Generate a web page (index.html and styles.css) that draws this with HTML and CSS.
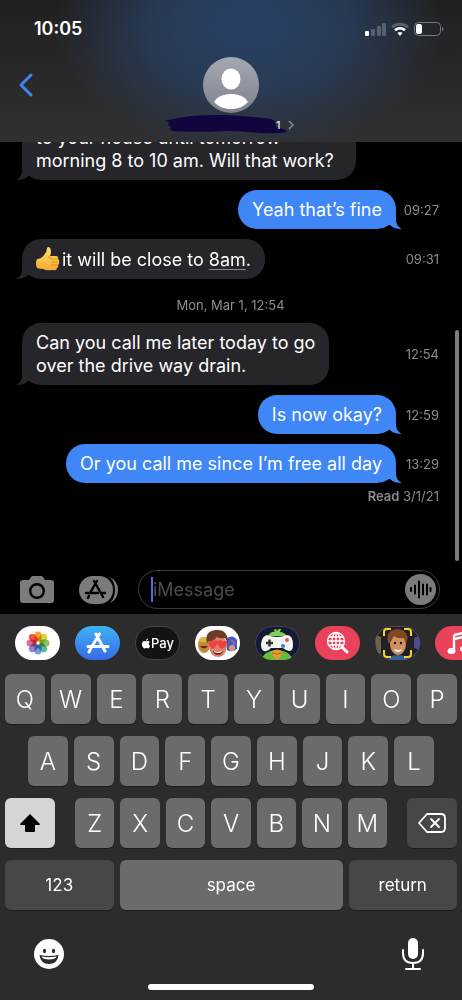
FILE: index.html
```html
<!DOCTYPE html>
<html lang="en">
<head>
    <meta charset="UTF-8">
    <meta name="viewport" content="width=device-width, initial-scale=1.0">
    <title>Messages</title>
    <link rel="stylesheet" href="styles.css">
</head>
<body>
    <div class="phone">
        <header class="header">
            <div class="status-bar">
                <span class="clock">10:05</span>
                <svg width="80" height="16" viewBox="0 0 80 16" aria-hidden="true">
                    <rect x="1" y="10" width="4" height="5" rx="1" fill="#fff"/>
                    <rect x="7" y="8" width="4" height="7" rx="1" fill="#56616f"/>
                    <rect x="13" y="5" width="4" height="10" rx="1" fill="#56616f"/>
                    <rect x="18" y="2" width="4" height="13" rx="1" fill="#56616f"/>
                    <path d="M28 6.200a12 12 0 0 1 16 0" fill="none" stroke="#59616a" stroke-width="2.600"/>
                    <path d="M31 9.200a7.500 7.500 0 0 1 10 0" fill="none" stroke="#fff" stroke-width="2.600"/>
                    <path d="M33.500 12a4 4 0 0 1 5 0L36 15z" fill="#fff"/>
                    <rect x="50.500" y="1.500" width="26" height="13" rx="4" fill="none" stroke="#77797c"/>
                    <rect x="52" y="3" width="6" height="10" rx="2" fill="#fff"/>
                    <path d="M78 6v4q1.500-.5 1.500-2T78 6z" fill="#77797c"/>
                </svg>
            </div>
            <button class="back" aria-label="Back">
                <svg width="16" height="26" viewBox="0 0 16 26"><path d="M13 3L3 13l10 10" fill="none" stroke="#3f83f5" stroke-width="3" stroke-linecap="round" stroke-linejoin="round"/></svg>
            </button>
            <button class="contact" aria-label="Contact details">
                <svg class="avatar" width="56" height="56" viewBox="0 0 56 56">
                    <defs>
                        <linearGradient id="avatarFill" x2="0" y2="1"><stop stop-color="#a4a8b3"/><stop offset="1" stop-color="#7f828c"/></linearGradient>
                    </defs>
                    <circle cx="28" cy="28" r="28" fill="url(#avatarFill)"/>
                    <ellipse cx="28" cy="22" rx="9.500" ry="10.500" fill="#fff"/>
                    <path d="M11 45c3-6 11-8 17-8s14 2 17 8c-5 5-10 7-17 7s-12-2-17-7z" fill="#fff"/>
                </svg>
                <span class="contact-name">
                    <svg width="124" height="20" viewBox="0 0 124 20">
                        <path d="M0 6l10-2C25 0 45 0 62 0c15 1 31 2 45 4l4 2 1 6 10 3c2 2-2 3-8 3-20 1-34-2-50-2-18 1-38 1-56 0-2-1-2-2-1-4l-3-2 1-3z" fill="#12043c"/>
                    </svg>
                    <span class="contact-digit">1</span>
                    <svg width="6" height="10" viewBox="0 0 6 10"><path d="M1 1l4 4-4 4" fill="none" stroke="#8a8b90" stroke-width="1.500"/></svg>
                </span>
            </button>
        </header>

        <main class="conversation">
            <div class="row">
                <p class="bubble received long">to your house until tomorrow<br>morning 8 to 10 am. Will that work?</p>
            </div>
            <div class="row">
                <p class="bubble sent">Yeah that’s fine</p>
                <time>09:27</time>
            </div>
            <div class="row">
                <p class="bubble received"><svg class="thumb" width="24" height="24" viewBox="0 0 24 24" role="img" aria-label="thumbs up">
                    <defs><linearGradient id="thumbFill" x2="0" y2="1"><stop stop-color="#ffe066"/><stop offset="1" stop-color="#f3a934"/></linearGradient></defs>
                    <path d="M1 12q4 0 7-4 3-3 3-7 1-2 3 0 2 3 0 8h6q3 0 2 3 2 1 1 3 1 2-1 3 1 2-1 3 0 3-4 2-7 1-10-1-3 0-6-1-2-5 0-9z" fill="url(#thumbFill)"/>
                    <path d="M15 12h7M15 15h7M15 18h7M12 10q4 0 3 2" fill="none" stroke="#d48a25" stroke-width=".8"/>
                </svg>it will be close to <a href="#">8am</a>.</p>
                <time>09:31</time>
            </div>
            <div class="date">Mon, Mar 1, 12:54</div>
            <div class="row">
                <p class="bubble received">Can you call me later today to go<br>over the drive way drain.</p>
                <time>12:54</time>
            </div>
            <div class="row">
                <p class="bubble sent">Is now okay?</p>
                <time>12:59</time>
            </div>
            <div class="row">
                <p class="bubble sent">Or you call me since I’m free all day</p>
                <time>13:29</time>
            </div>
            <div class="read"><b>Read</b> 3/1/21</div>
            <div class="scroll-thumb"></div>
        </main>

        <form class="compose">
            <button type="button" aria-label="Camera">
                <svg width="36" height="28" viewBox="0 0 36 28">
                    <path d="M4 4h6l2-3q1-1 2-1h8q1 0 2 1l2 3h6q3 0 3 3v17q0 3-3 3H4q-3 0-3-3V7q0-3 3-3z" fill="#7b7b7b"/>
                    <circle cx="18" cy="15" r="6.800" fill="none" stroke="#000" stroke-width="2.400"/>
                </svg>
            </button>
            <button type="button" aria-label="Apps">
                <svg width="40" height="28" viewBox="0 0 40 28">
                    <rect width="34" height="28" rx="14" fill="#7b7b7b"/>
                    <path d="M31 1q8 4 8 13t-8 13q5-5 5-13T31 1z" fill="#7b7b7b"/>
                    <path d="M18 5l-7 12M15 5l9 16M7 17h12M22 17h4M10 20l-1 2" fill="none" stroke="#000" stroke-width="2.400" stroke-linecap="round"/>
                </svg>
            </button>
            <div class="field">
                <span class="caret"></span>
                <input type="text" placeholder="iMessage" aria-label="iMessage">
                <button type="button" aria-label="Record audio">
                    <svg width="31" height="31" viewBox="0 0 31 31">
                        <circle cx="15.500" cy="15.500" r="15.500" fill="#7b7b7b"/>
                        <path d="M6 14v3M10 11.500v8M14 7.500v16M18 10.500v10M22 10.500v10M25.500 14v3" stroke="#000" stroke-width="2" stroke-linecap="round"/>
                    </svg>
                </button>
            </div>
        </form>

        <section class="keyboard">
            <div class="apps">
                <button class="app white" aria-label="Photos">
                    <svg width="24" height="24" viewBox="-12 -12 24 24">
                        <g class="petals">
                            <rect x="-3.500" y="-11.500" width="7" height="10" rx="3.500" fill="#f5a02c"/>
                            <rect x="-3.500" y="-11.500" width="7" height="10" rx="3.500" fill="#d9d333" transform="rotate(45)"/>
                            <rect x="-3.500" y="-11.500" width="7" height="10" rx="3.500" fill="#8dc45b" transform="rotate(90)"/>
                            <rect x="-3.500" y="-11.500" width="7" height="10" rx="3.500" fill="#59b69a" transform="rotate(135)"/>
                            <rect x="-3.500" y="-11.500" width="7" height="10" rx="3.500" fill="#729edb" transform="rotate(180)"/>
                            <rect x="-3.500" y="-11.500" width="7" height="10" rx="3.500" fill="#9a83c4" transform="rotate(225)"/>
                            <rect x="-3.500" y="-11.500" width="7" height="10" rx="3.500" fill="#d86c9a" transform="rotate(270)"/>
                            <rect x="-3.500" y="-11.500" width="7" height="10" rx="3.500" fill="#ed5a4a" transform="rotate(315)"/>
                        </g>
                    </svg>
                </button>
                <button class="app blue" aria-label="App Store">
                    <svg width="24" height="22" viewBox="0 0 24 22"><path d="M13.500 2L5 16M10 2l9 17M2 14.500h12M18 14.500h4M4 18l-1 2" fill="none" stroke="#fff" stroke-width="3" stroke-linecap="round"/></svg>
                </button>
                <button class="app pay">
                    <svg width="10" height="11" viewBox="0 0 24 24"><path fill="#fff" d="M12.152 6.896c-.948 0-2.415-1.078-3.960-1.040-2.040.027-3.910 1.183-4.961 3.014-2.117 3.675-.546 9.103 1.519 12.090 1.013 1.454 2.208 3.090 3.792 3.039 1.520-.065 2.090-.987 3.935-.987 1.831 0 2.350.987 3.960.948 1.637-.026 2.676-1.480 3.676-2.948 1.156-1.688 1.636-3.325 1.662-3.415-.039-.013-3.182-1.221-3.220-4.857-.026-3.040 2.480-4.494 2.597-4.559-1.429-2.090-3.623-2.324-4.390-2.376-2-.156-3.675 1.090-4.610 1.090zM15.530 3.830c.843-1.012 1.400-2.427 1.245-3.830-1.207.052-2.662.805-3.532 1.818-.780.896-1.454 2.338-1.273 3.714 1.338.104 2.715-.688 3.560-1.702"/></svg>
                    <span>Pay</span>
                </button>
                <button class="app white" aria-label="Memoji stickers">
                    <svg width="45" height="34" viewBox="0 0 45 34">
                        <ellipse cx="9" cy="19" rx="6" ry="8" fill="#c48a34"/>
                        <path d="M3 16q1-5 6-5 5 1 6 5z" fill="#e0b54d"/>
                        <path d="M5 20q4 5 8 0" fill="#5c2c18"/>
                        <path d="M32 12q6-4 10 2v9q-5 4-10 1z" fill="#405ac2"/>
                        <path d="M36 14l4 3-4 4" fill="none" stroke="#8b62c7" stroke-width="2"/>
                        <circle cx="37" cy="22" r="3" fill="#d8976e"/>
                        <ellipse cx="23" cy="20" rx="9" ry="11" fill="#d9846a"/>
                        <path d="M12 17q-3-12 9-13 12-1 12 13l-3-5q-5 1-8-1-4 5-8 4z" fill="#6c3d26"/>
                        <path d="M14 15q3-1 4 1 2-3 5-1 0 5-6 8-4-4-3-8zM23 15q3-2 5 1 2-2 4-1 1 5-5 8-5-3-4-8z" fill="#f23f3d"/>
                        <path d="M18 25q5 2 10 0-1 4-5 4t-5-4z" fill="#7c2520"/>
                        <path d="M19 25q4 2 8 0v1q-4 2-8 0z" fill="#fff"/>
                    </svg>
                </button>
                <button class="app navy" aria-label="Games">
                    <svg width="45" height="34" viewBox="0 0 45 34">
                        <path d="M7 34q1-9 15-10 14 1 15 10z" fill="#69bd3c"/>
                        <path d="M13 10q3-5 7-4-2-2 0-3 2 0 2 2 2-3 4-2l-1 3q4 0 7 4z" fill="#80ce52"/>
                        <path d="M12 9q10 4 20 0 6 0 6 10 0 6-4 6-4-1-6-3H16q-3 4-7 3-3-1-3-7 1-8 6-9z" fill="#f4f4f2"/>
                        <path d="M11 17h7M14.500 13.500v7" stroke="#333" stroke-width="2.500"/>
                        <circle cx="32" cy="14" r="2" fill="#d5604c"/>
                        <circle cx="28" cy="20" r="2" fill="#4678cc"/>
                        <path d="M16 26q6-5 12 0-2 5-6 8-4-3-6-8z" fill="#eb9a32"/>
                        <path d="M17 27q5 2 10 0" fill="none" stroke="#b76424"/>
                    </svg>
                </button>
                <button class="app red" aria-label="Image search">
                    <svg width="24" height="24" viewBox="0 0 24 24"><g fill="none" stroke="#fff" stroke-width="1.400"><circle cx="10" cy="10" r="8.500"/><ellipse cx="10" cy="10" rx="4" ry="8.500"/><path d="M10 2v16M2 10h16M3 6h14M3 14h14"/><path d="M16 16l5 5" stroke-width="3" stroke-linecap="round"/></g></svg>
                </button>
                <button class="app dark" aria-label="Memoji">
                    <svg width="45" height="34" viewBox="0 0 45 34">
                        <path d="M0 9l6 2v16l-4 2z" fill="#6b6350"/>
                        <path d="M39 12l6-3v15l-6-2z" fill="#4c4b8c"/>
                        <path d="M13 34q2-5 10-5t10 5z" fill="#35609b"/>
                        <ellipse cx="23" cy="18" rx="8" ry="11" fill="#d09263"/>
                        <path d="M13 17q-2-9 3-12 7-4 13 0 6 5 2 13l-2-6q-7 1-10-2l-4 7z" fill="#804722"/>
                        <circle cx="20" cy="17" r="1.200" fill="#311"/><circle cx="26" cy="17" r="1.200" fill="#311"/>
                        <path d="M19 23q4 2 8 0-1 3-4 3t-4-3z" fill="#fff"/>
                        <path d="M9 10V6q0-3 3-3h4M29 3h4q3 0 3 3v4M36 24v4q0 3-3 3h-4M16 31h-4q-3 0-3-3v-4" fill="none" stroke="#f0d437" stroke-width="2"/>
                    </svg>
                </button>
                <button class="app red" aria-label="Music">
                    <svg width="22" height="24" viewBox="0 0 22 24"><path d="M7 4l13-3v16M7 4v15M7 8l13-3" fill="none" stroke="#fff" stroke-width="2.400"/><ellipse cx="4.500" cy="20" rx="4" ry="3" fill="#fff"/><ellipse cx="17" cy="18" rx="4" ry="3" fill="#fff"/></svg>
                </button>
            </div>

            <div class="keys">
                <div class="key-row">
                    <button class="key">Q</button>
                    <button class="key">W</button>
                    <button class="key">E</button>
                    <button class="key">R</button>
                    <button class="key">T</button>
                    <button class="key">Y</button>
                    <button class="key">U</button>
                    <button class="key">I</button>
                    <button class="key">O</button>
                    <button class="key">P</button>
                </div>
                <div class="key-row middle">
                    <button class="key">A</button>
                    <button class="key">S</button>
                    <button class="key">D</button>
                    <button class="key">F</button>
                    <button class="key">G</button>
                    <button class="key">H</button>
                    <button class="key">J</button>
                    <button class="key">K</button>
                    <button class="key">L</button>
                </div>
                <div class="key-row lower">
                    <button class="key shift" aria-label="Shift">
                        <svg width="22" height="20" viewBox="0 0 22 20"><path d="M11 1l10 10q0 1-1 1h-4v6q0 1-1 1H7q-1 0-1-1v-6H2q-1 0-1-1z" fill="#000"/></svg>
                    </button>
                    <div class="letters">
                        <button class="key">Z</button>
                        <button class="key">X</button>
                        <button class="key">C</button>
                        <button class="key">V</button>
                        <button class="key">B</button>
                        <button class="key">N</button>
                        <button class="key">M</button>
                    </div>
                    <button class="key delete" aria-label="Delete">
                        <svg width="28" height="22" viewBox="0 0 28 22" fill="none" stroke="#fff" stroke-width="1.800" stroke-linecap="round" stroke-linejoin="round"><path d="M9 2h14q4 0 4 4v10q0 4-4 4H9L1 11z"/><path d="M13 7l8 8M21 7l-8 8"/></svg>
                    </button>
                </div>
                <div class="key-row">
                    <button class="key wide">123</button>
                    <button class="key space">space</button>
                    <button class="key wide">return</button>
                </div>
            </div>

            <div class="tools">
                <button aria-label="Emoji">
                    <svg width="30" height="30" viewBox="0 0 30 30">
                        <circle cx="15" cy="15" r="15" fill="#fff"/>
                        <ellipse cx="10.500" cy="12" rx="1.600" ry="2.200" fill="#2c2c2c"/>
                        <ellipse cx="19.500" cy="12" rx="1.600" ry="2.200" fill="#2c2c2c"/>
                        <path d="M5.500 16q9.500 2 19 0-1 9-9.500 9t-9.500-9z" fill="#2c2c2c"/>
                        <path d="M7.500 17.500q7.500 1.500 15 0-1 3-7.500 3t-7.500-3z" fill="#fff"/>
                    </svg>
                </button>
                <button aria-label="Dictate">
                    <svg width="22" height="32" viewBox="0 0 22 32"><rect x="6" y="0" width="10" height="21" rx="5" fill="#fff"/><path d="M1 12v3q0 10 10 10t10-10v-3M11 25v6M4 31h14" fill="none" stroke="#fff" stroke-width="2" stroke-linecap="round"/></svg>
                </button>
            </div>
            <div class="home-bar"></div>
        </section>
    </div>
</body>
</html>
```
FILE: styles.css
```css
* {
    box-sizing: border-box;
}
body {
    margin: 0;
    background-color: #000;
    color: #fff;
    font-family: Inter, "Liberation Sans", sans-serif;
}
button {
    padding: 0;
    border: none;
    background: none;
    color: inherit;
    font: inherit;
    cursor: pointer;
}
svg {
    display: block;
}
.phone {
    display: flex;
    flex-direction: column;
    height: 100vh;
    overflow: hidden;
}

/* header */
.header {
    position: relative;
    flex: none;
    display: flex;
    flex-direction: column;
    align-items: center;
    padding-bottom: 7px;
    background:
        radial-gradient(ellipse 42% 92% at 54% 18%, #293f5f 20%, rgba(41, 63, 95, 0.8) 50%, rgba(41, 63, 95, 0) 100%),
        linear-gradient(#202021, #303030);
}
.status-bar {
    display: flex;
    align-items: center;
    justify-content: space-between;
    align-self: stretch;
    height: 57px;
    padding: 0 18px 0 34px;
}
.clock {
    font-size: 18px;
    font-weight: 600;
}
.back {
    position: absolute;
    left: 18px;
    top: 72px;
}
.contact {
    display: flex;
    flex-direction: column;
    align-items: center;
    gap: 2px;
}
.contact-name {
    position: relative;
    display: flex;
    align-items: center;
    height: 20px;
    padding-right: 5px;
}
.contact-digit {
    position: absolute;
    right: 18px;
    top: 4px;
    font-size: 11px;
    line-height: 12px;
}

/* messages */
.conversation {
    position: relative;
    flex: 1;
    min-height: 0;
    display: flex;
    flex-direction: column;
    justify-content: flex-end;
    gap: 10px;
    padding: 0 23px 62px 22px;
    overflow: hidden;
}
.row {
    display: flex;
    align-items: center;
    justify-content: space-between;
    gap: 7px;
}
.bubble {
    position: relative;
    margin: 0;
    padding: 8px 14px;
    border-radius: 19px;
    font-size: 18px;
    line-height: 23px;
}
.bubble::after {
    content: "";
    position: absolute;
    bottom: 0;
    width: 20px;
    height: 16px;
    background-color: inherit;
    clip-path: path("M2 0H14V6C14 11 16 14 20 16C15 16 11 15 8 12H2Z");
}
.long {
    width: 80%;
}
.received {
    background-color: #26252a;
}
.received::after {
    left: -6px;
    transform: scaleX(-1);
}
.sent {
    margin-left: auto;
    background-color: #3f86f7;
}
.sent::after {
    right: -6px;
}
.bubble a {
    color: inherit;
    text-decoration-color: #8b8b90;
    text-decoration-thickness: 1px;
    text-underline-offset: 3px;
}
.thumb {
    display: inline-block;
    margin-right: 2px;
    vertical-align: -5px;
}
time,
.date,
.read {
    color: #8b8b90;
    font-size: 13px;
    line-height: 16px;
}
time {
    flex: none;
    width: 36px;
    text-align: right;
}
.date {
    margin-top: 8px;
    text-align: center;
}
.read {
    margin-top: -5px;
    text-align: right;
}
.read b {
    font-weight: 600;
}
.scroll-thumb {
    position: absolute;
    right: 3px;
    bottom: 5px;
    width: 4px;
    height: 231px;
    border-radius: 2px;
    background-color: #7c7c7c;
}

/* message field */
.compose {
    flex: none;
    display: flex;
    align-items: center;
    gap: 24px;
    padding: 4px 22px 5px 19px;
}
.compose button {
    flex: none;
}
.field {
    flex: 1;
    display: flex;
    align-items: center;
    min-width: 0;
    height: 39px;
    margin-left: -5px;
    padding: 0 3px 0 12px;
    border: 1px solid #3c3c3e;
    border-radius: 20px;
}
.caret {
    width: 2px;
    height: 25px;
    background-color: #5a66e8;
}
.field input {
    flex: 1;
    min-width: 0;
    padding: 0;
    border: none;
    outline: none;
    background: none;
    color: #fff;
    font: inherit;
    font-size: 18px;
}
.field input::placeholder {
    color: #4c4c4f;
}

/* keyboard */
.keyboard {
    flex: none;
    display: flex;
    flex-direction: column;
    height: 386px;
    background-color: #2c2c2c;
}
.apps {
    display: flex;
    gap: 15px;
    padding: 12px 0 14px 15px;
    overflow: hidden;
}
.app {
    flex: none;
    display: flex;
    align-items: center;
    justify-content: center;
    width: 45px;
    height: 34px;
    border-radius: 17px;
    overflow: hidden;
}
.white {
    background-color: #fff;
}
.petals rect {
    mix-blend-mode: multiply;
}
.blue {
    background: linear-gradient(#41b2f3, #356be8);
}
.pay {
    border: 1px solid #454545;
    background-color: #131313;
    font-size: 13px;
    font-weight: 500;
}
.navy {
    background-color: #141a34;
    box-shadow: inset 0 0 0 1px #3b4064;
}
.red {
    background-color: #ea425b;
}
.dark {
    background-color: #222023;
    box-shadow: inset 0 0 0 1px #4b4b50;
}
.keys {
    display: flex;
    flex-direction: column;
    gap: 12px;
    padding: 0 5px;
}
.key-row,
.letters {
    display: flex;
    gap: 6px;
}
.middle {
    padding: 0 23px;
}
.lower {
    gap: 20px;
}
.letters {
    flex: 1;
}
.key {
    flex: 1;
    display: flex;
    align-items: center;
    justify-content: center;
    min-width: 0;
    height: 50px;
    border-radius: 6px;
    background-color: #6b6b6b;
    box-shadow: 0 1px 0 #1c1c1c;
    font-size: 24px;
    font-weight: 300;
}
.shift,
.delete {
    flex: none;
    width: 50px;
}
.shift {
    background-color: #d5d5d5;
}
.delete,
.wide {
    background-color: #474747;
}
.wide,
.space {
    font-size: 17px;
    font-weight: 400;
}
.space {
    flex: 2 1 6px;
}
.tools {
    display: flex;
    align-items: center;
    justify-content: space-between;
    padding: 28px 38px 14px 34px;
}
.home-bar {
    width: 36%;
    height: 6px;
    margin: 0 auto;
    border-radius: 3px;
    background-color: #fff;
}
```
